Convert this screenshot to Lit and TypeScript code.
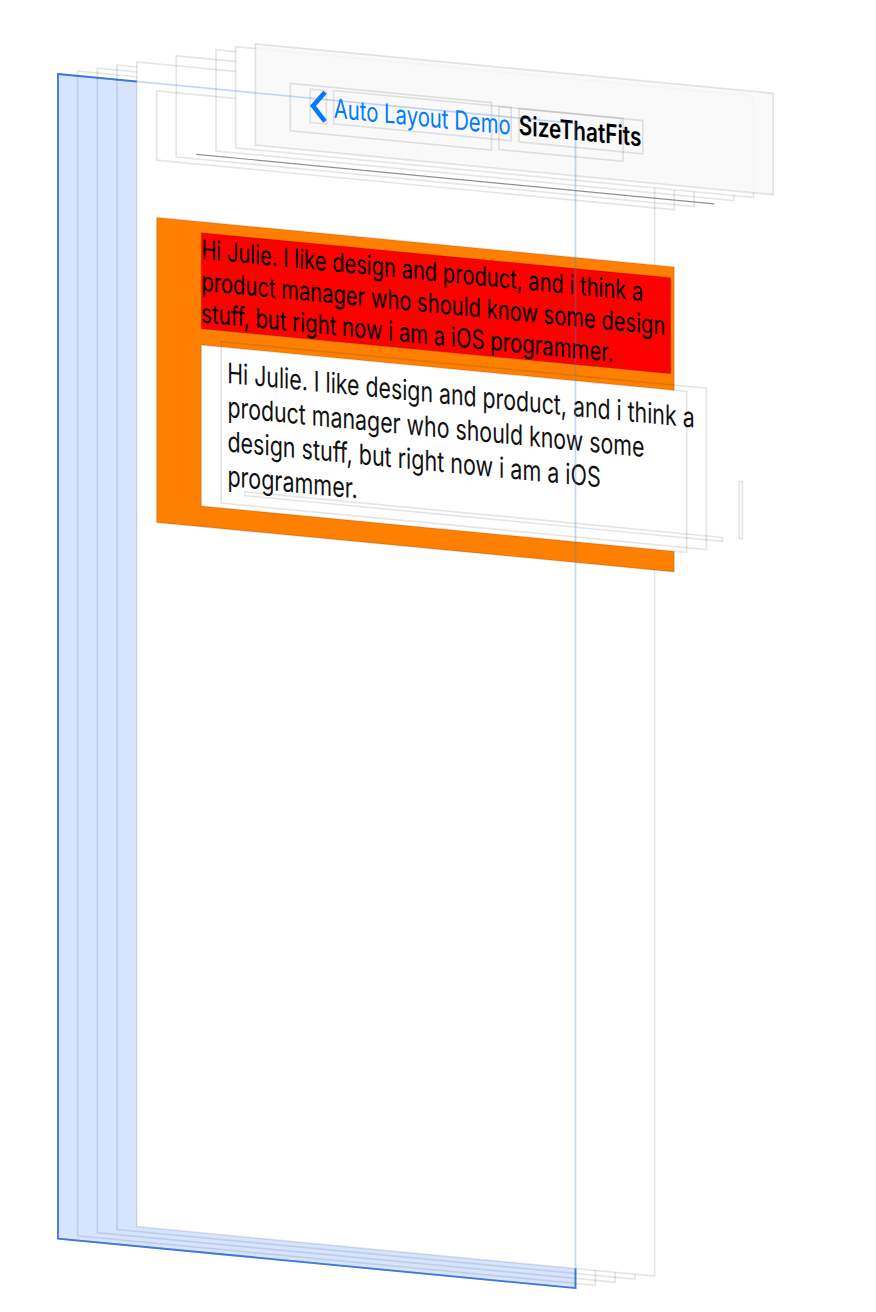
import { LitElement, css, svg, html } from "lit";
import { customElement } from "lit/decorators.js";

/** Vertical shear of every layer in the exploded view. */
const SHEAR = 0.0956;

interface Layer {
  kind: string;
  x: number;
  y: number;
  w: number;
  h: number;
}

interface Line {
  kind: string;
  x: number;
  y: number;
  length: number;
  text: string;
}

const layer = (kind: string, x: number, y: number, w: number, h: number): Layer => ({ kind, x, y, w, h });
const line = (kind: string, x: number, y: number, length: number, text: string): Line => ({ kind, x, y, length, text });

const WINDOW = layer("selected", 58, 74, 517.5, 1164.6);

const SCREENS: Layer[] = [
  layer("frame", 77.6, 71.2, 517.8, 1164.6),
  layer("frame", 97.3, 68.1, 517.8, 1164.6),
  layer("frame", 117, 65, 517.8, 1164.6),
  layer("frame solid", 136.8, 62, 517.8, 1164.6),
];

const BAR: Layer[] = [
  layer("frame", 156.6, 90.8, 517.8, 69.4),
  layer("frame", 176.3, 55.8, 517.8, 101.2),
  layer("hairline", 196.2, 154.3, 517.8, 0),
  layer("frame", 216, 49.8, 517.8, 101.2),
  layer("frame solid", 235.7, 46.7, 517.8, 101.2),
  layer("frame bar", 255.4, 43.8, 517.8, 101.4),
  layer("frame", 290.3, 83.4, 201.2, 47.4),
  layer("frame", 310.2, 89.2, 16.2, 33.4),
  layer("frame", 333.6, 90.5, 177.6, 33.3),
  layer("frame", 498.9, 106.5, 124.2, 43),
  layer("frame", 519, 108.7, 123.8, 33.2),
];

const CONTENT: Layer[] = [
  layer("frame orange", 156.6, 217.4, 517.6, 305),
  layer("frame red", 201.3, 232.8, 469.4, 96),
  layer("frame solid", 201.3, 345, 485.4, 161),
  layer("frame", 221.2, 341.8, 485.2, 161.3),
  layer("frame", 244.8, 491.8, 477.5, 3.8),
  layer("frame", 739.2, 481.5, 3.2, 57),
];

const TEXTS: Line[] = [
  line("label", 201.4, 258.8, 442, "Hi Julie. I like design and product, and i think a"),
  line("label", 201.4, 290.7, 464, "product manager who should know some design"),
  line("label", 201.3, 322.4, 412.2, "stuff, but right now i am a iOS programmer."),
  line("body", 227.2, 382.9, 467.4, "Hi Julie. I like design and product, and i think a"),
  line("body", 227.4, 417.1, 417, "product manager who should know some"),
  line("body", 227.4, 451.5, 373.4, "design stuff, but right now i am a iOS"),
  line("body", 227.4, 486, 130.2, "programmer."),
  line("back", 333.8, 117.8, 176.8, "Auto Layout Demo"),
  line("title", 518.8, 134.6, 122.6, "SizeThatFits"),
];

@customElement("app-root")
export class AppRoot extends LitElement {
  static styles = css`
    :host {
      display: block;
      width: 876px;
      height: 1312px;
      background: #fff;
      overflow: hidden;
    }
    .scene {
      display: block;
      width: 876px;
      height: 1312px;
    }
    .frame {
      fill: none;
      stroke: rgba(0, 0, 0, 0.1);
      stroke-width: 1.7;
    }
    .solid {
      fill: #fff;
    }
    .bar {
      fill: rgba(248, 248, 248, 0.82);
    }
    .orange {
      fill: #ff8000;
    }
    .red {
      fill: #f00;
    }
    .hairline {
      fill: none;
      stroke: #909090;
      stroke-width: 1.2;
    }
    .selected {
      fill: #d6e4ff;
      stroke: #3d77d3;
      stroke-width: 1.8;
    }
    .ghost {
      fill: none;
      stroke: rgba(61, 130, 225, 0.32);
      stroke-width: 1.7;
    }
    .chevron {
      fill: none;
      stroke: #007aff;
      stroke-width: 4.6;
    }
    text {
      font-family: Inter, "Liberation Sans", sans-serif;
    }
    .label {
      font-size: 26.5px;
    }
    .body {
      font-size: 28.2px;
      fill: #111;
    }
    .back {
      font-size: 26.5px;
      fill: #007aff;
    }
    .title {
      font-size: 26.5px;
      font-weight: 600;
    }
  `;

  private drawLayer = ({ kind, x, y, w, h }: Layer) => {
    const drop = w * SHEAR;
    return svg`<path class=${kind} d="M${x} ${y}L${x + w} ${y + drop}V${y + drop + h}L${x} ${y + h}Z"></path>`;
  };

  private drawText = ({ kind, x, y, length, text }: Line) => svg`
    <text class=${kind} transform="matrix(1 ${SHEAR} 0 1 ${x} ${y})"
      textLength=${length} lengthAdjust="spacingAndGlyphs">${text}</text>`;

  render() {
    return html`
      <svg class="scene" viewBox="0 0 876 1312">
        ${this.drawLayer(WINDOW)}
        ${SCREENS.map(this.drawLayer)}
        ${BAR.map(this.drawLayer)}
        <path class="chevron" d="M325 92.2L313 105.9L325 121.4"></path>
        ${CONTENT.map(this.drawLayer)}
        ${TEXTS.map(this.drawText)}
        ${this.drawLayer({ ...WINDOW, kind: "ghost" })}
      </svg>
    `;
  }
}
